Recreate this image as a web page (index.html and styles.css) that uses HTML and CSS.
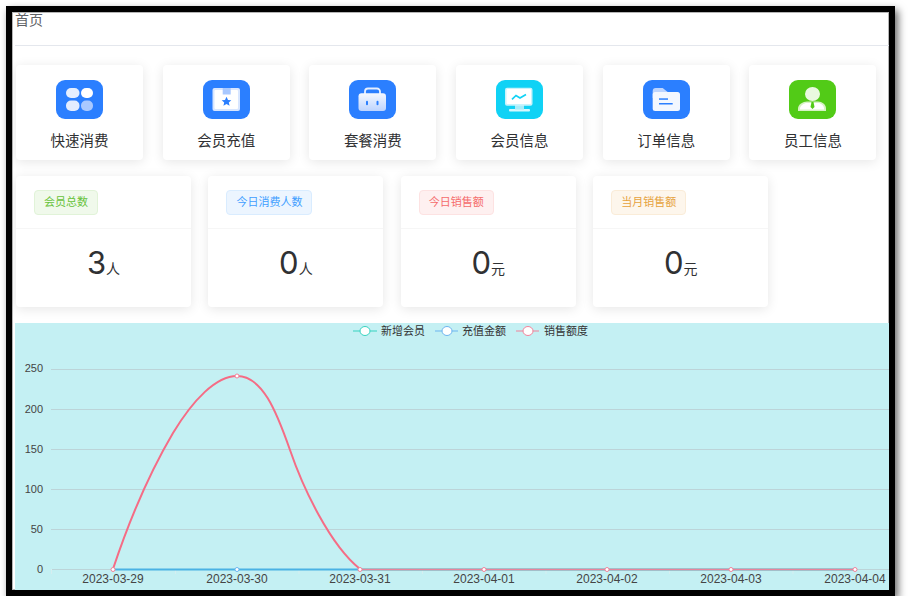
FILE: index.html
```html
<!DOCTYPE html>
<html>
<head>
    <title>首页</title>
    <link rel="stylesheet" href="styles.css">
</head>
<body>
    <div class="frame">
        <div class="page-title">首页</div>

        <div class="shortcuts">
            <div class="shortcut">
                <svg class="shortcut-icon" viewBox="0 0 47 39">
                    <rect width="47" height="39" rx="9" fill="#2b7fff"/>
                    <rect x="10" y="8" width="13.500" height="10" rx="5" fill="#e6efff"/>
                    <rect x="25" y="8" width="12" height="10" rx="5" fill="#fff"/>
                    <rect x="10" y="20.500" width="13.500" height="10.500" rx="5" fill="#e3edff"/>
                    <rect x="25" y="20.500" width="12" height="10.500" rx="5" fill="#a9c9ff"/>
                </svg>
                <span>快速消费</span>
            </div>
            <div class="shortcut">
                <svg class="shortcut-icon" viewBox="0 0 47 39">
                    <rect width="47" height="39" rx="9" fill="#2b7fff"/>
                    <rect x="9.500" y="8" width="27.500" height="23" rx="2" fill="#d8e6ff"/>
                    <rect x="11.500" y="10" width="23.500" height="19" rx="1" fill="#fff"/>
                    <rect x="19.700" y="8" width="8" height="6.500" fill="#a8c8ff"/>
                    <polygon points="23.500,16.800 25,20 28.300,20.300 25.800,22.500 26.600,25.800 23.500,24 20.400,25.800 21.200,22.500 18.700,20.300 22,20" fill="#2b7fff"/>
                </svg>
                <span>会员充值</span>
            </div>
            <div class="shortcut">
                <svg class="shortcut-icon" viewBox="0 0 47 39">
                    <defs>
                        <linearGradient id="caseBody" x1="0" y1="0" x2="0" y2="1">
                            <stop offset="0" stop-color="#f4f8ff"/>
                            <stop offset="1" stop-color="#bdd4ff"/>
                        </linearGradient>
                    </defs>
                    <rect width="47" height="39" rx="9" fill="#2b7fff"/>
                    <path d="M16 14v-2.500a3 3 0 0 1 3-3h9a3 3 0 0 1 3 3v2.500" fill="none" stroke="#e6efff" stroke-width="1.800"/>
                    <rect x="9.500" y="13.300" width="27.500" height="17.700" rx="3" fill="url(#caseBody)"/>
                    <rect x="17" y="20.700" width="2" height="4.500" rx="1" fill="#2b7fff"/>
                    <rect x="27.500" y="20.700" width="2" height="4.500" rx="1" fill="#2b7fff"/>
                </svg>
                <span>套餐消费</span>
            </div>
            <div class="shortcut">
                <svg class="shortcut-icon" viewBox="0 0 47 39">
                    <rect width="47" height="39" rx="9" fill="#10d2f5"/>
                    <rect x="13" y="29" width="21" height="2.500" rx="1" fill="#d6f7fd"/>
                    <rect x="19" y="24" width="9" height="5.500" fill="#a9ecf9"/>
                    <rect x="9" y="7.700" width="27.500" height="18" rx="2" fill="#c9f3fb"/>
                    <rect x="10.500" y="9" width="24.500" height="15" rx="1" fill="#fff"/>
                    <polyline points="16,19.300 20,15.500 24,18 30,14.500" fill="none" stroke="#10d2f5" stroke-width="1.700"/>
                </svg>
                <span>会员信息</span>
            </div>
            <div class="shortcut">
                <svg class="shortcut-icon" viewBox="0 0 47 39">
                    <rect width="47" height="39" rx="9" fill="#2b7fff"/>
                    <path d="M9.700 11a3 3 0 0 1 3-3h7l5 4v6h-15z" fill="#bcd4ff"/>
                    <rect x="9.700" y="12" width="27.300" height="19" rx="2.500" fill="#f3f7ff"/>
                    <rect x="16" y="18.300" width="9" height="1.500" fill="#2b7fff"/>
                    <rect x="16" y="23" width="13.700" height="1.500" fill="#2b7fff"/>
                </svg>
                <span>订单信息</span>
            </div>
            <div class="shortcut">
                <svg class="shortcut-icon" viewBox="0 0 47 39">
                    <rect width="47" height="39" rx="9" fill="#52cb17"/>
                    <ellipse cx="23.500" cy="14" rx="7.500" ry="7" fill="#eaf9e0"/>
                    <path d="M9 31v-2.500c0-4 5-7 9-7h11c4 0 8 3 8 7v2.500z" fill="#d6f2c4"/>
                    <path d="M11 29.500v-1c0-3 4-5.500 7-5.500h11c3 0 6 2.500 6 5.500v1z" fill="#fff"/>
                    <polygon points="22.500,22 24.500,22 25.500,27 23.500,29 21.500,27" fill="#52cb17"/>
                </svg>
                <span>员工信息</span>
            </div>
        </div>

        <div class="stats">
            <div class="stat">
                <div class="stat-head"><span class="tag tag-green">会员总数</span></div>
                <div class="stat-body"><span class="num">3</span><span class="unit">人</span></div>
            </div>
            <div class="stat">
                <div class="stat-head"><span class="tag tag-blue">今日消费人数</span></div>
                <div class="stat-body"><span class="num">0</span><span class="unit">人</span></div>
            </div>
            <div class="stat">
                <div class="stat-head"><span class="tag tag-red">今日销售额</span></div>
                <div class="stat-body"><span class="num">0</span><span class="unit">元</span></div>
            </div>
            <div class="stat">
                <div class="stat-head"><span class="tag tag-orange">当月销售额</span></div>
                <div class="stat-body"><span class="num">0</span><span class="unit">元</span></div>
            </div>
        </div>

        <div class="chart">
            <svg class="chart-svg" viewBox="15 323 874 267">
                <!-- legend -->
                <g class="legend">
                    <line x1="353" y1="331" x2="377" y2="331" stroke="#36d3c0"/>
                    <ellipse cx="365" cy="331" rx="5" ry="4.500" fill="#fff" stroke="#36d3c0"/>
                    <text x="381" y="335">新增会员</text>
                    <line x1="435" y1="331" x2="458" y2="331" stroke="#6cb5f0"/>
                    <ellipse cx="447" cy="331" rx="5" ry="4.500" fill="#fff" stroke="#6cb5f0"/>
                    <text x="462" y="335">充值金额</text>
                    <line x1="516" y1="331" x2="539" y2="331" stroke="#f2829a"/>
                    <ellipse cx="528" cy="331" rx="5" ry="4.500" fill="#fff" stroke="#f2829a"/>
                    <text x="544" y="335">销售额度</text>
                </g>

                <!-- grid -->
                <g class="grid">
                    <line x1="51" y1="369.500" x2="889" y2="369.500"/>
                    <line x1="51" y1="409.500" x2="889" y2="409.500"/>
                    <line x1="51" y1="449.500" x2="889" y2="449.500"/>
                    <line x1="51" y1="489.500" x2="889" y2="489.500"/>
                    <line x1="51" y1="529.500" x2="889" y2="529.500"/>
                    <line x1="51" y1="569.500" x2="889" y2="569.500"/>
                </g>
                <g class="ticks">
                    <line x1="51.500" y1="569" x2="51.500" y2="574"/>
                    <line x1="175.500" y1="569" x2="175.500" y2="574"/>
                    <line x1="299" y1="569" x2="299" y2="574"/>
                    <line x1="422.500" y1="569" x2="422.500" y2="574"/>
                    <line x1="546" y1="569" x2="546" y2="574"/>
                    <line x1="669.500" y1="569" x2="669.500" y2="574"/>
                    <line x1="793" y1="569" x2="793" y2="574"/>
                </g>

                <!-- axis labels -->
                <g class="y-labels">
                    <text x="43" y="372">250</text>
                    <text x="43" y="413">200</text>
                    <text x="43" y="453">150</text>
                    <text x="43" y="493">100</text>
                    <text x="43" y="533">50</text>
                    <text x="43" y="573">0</text>
                </g>
                <g class="x-labels">
                    <text x="113" y="583">2023-03-29</text>
                    <text x="237" y="583">2023-03-30</text>
                    <text x="360" y="583">2023-03-31</text>
                    <text x="484" y="583">2023-04-01</text>
                    <text x="607" y="583">2023-04-02</text>
                    <text x="731" y="583">2023-04-03</text>
                    <text x="855" y="583">2023-04-04</text>
                </g>

                <!-- series -->
                <line x1="113" y1="569.500" x2="360" y2="569.500" class="line-blue"/>
                <line x1="360" y1="569.500" x2="855" y2="569.500" class="line-grey"/>
                <line x1="360" y1="569.500" x2="855" y2="569.500" class="line-pink-thin"/>
                <path class="line-pink" d="M113 569C130 518 150 472 173 433C193 400 216 376 237 376C262 376 276 410 290 450C303 488 330 545 360 569"/>
                <circle class="dot-blue" cx="237" cy="569.500" r="2"/>
                <circle class="dot-pink" cx="113" cy="569.500" r="2"/>
                <circle class="dot-pink" cx="237" cy="376" r="2"/>
                <circle class="dot-pink" cx="360" cy="569.500" r="2"/>
                <circle class="dot-pink" cx="484" cy="569.500" r="2"/>
                <circle class="dot-pink" cx="607" cy="569.500" r="2"/>
                <circle class="dot-pink" cx="731" cy="569.500" r="2"/>
                <circle class="dot-pink" cx="855" cy="569.500" r="2"/>
            </svg>
        </div>
    </div>
</body>
</html>
```

FILE: styles.css
```css
body {
    margin: 0;
    background: #fff;
    font-family: "Liberation Sans", "Noto Sans CJK SC", sans-serif;
}
.frame {
    width: 874px;
    height: 578px;
    margin: 6px 0 0 6px;
    padding-left: 3px;
    border: 6px solid #000;
    box-shadow: 3px 4px 8px rgba(0, 0, 0, 0.6), inset 0 0 0 1px #b5b5b5;
    overflow: hidden;
}
.page-title {
    height: 33px;
    border-bottom: 1px solid #e4e7ed;
    font-size: 14px;
    line-height: 17px;
    color: #606266;
}
.shortcuts {
    display: flex;
    gap: 19.7px;
    margin-top: 19px;
    padding-left: 1px;
}
.shortcut {
    width: 127px;
    height: 95px;
    padding-top: 15px;
    box-sizing: border-box;
    display: flex;
    flex-direction: column;
    align-items: center;
    background: #fff;
    border-radius: 4px;
    box-shadow: 0 2px 12px rgba(0, 0, 0, 0.1);
    font-size: 14.5px;
    color: #303133;
}
.shortcut-icon {
    width: 47px;
    height: 39px;
    margin-bottom: 10px;
}
.stats {
    display: flex;
    gap: 17.4px;
    margin-top: 16px;
    padding-left: 1px;
}
.stat {
    width: 175px;
    height: 131px;
    background: #fff;
    border-radius: 4px;
    box-shadow: 0 2px 12px rgba(0, 0, 0, 0.1);
}
.stat-head {
    height: 53px;
    padding: 14px 0 0 18px;
    box-sizing: border-box;
    border-bottom: 1px solid #f6f6f6;
}
.tag {
    display: inline-block;
    height: 25px;
    padding: 0 9px;
    box-sizing: border-box;
    border: 1px solid;
    border-radius: 4px;
    font-size: 11px;
    line-height: 23px;
}
.tag-green {
    background: #f0f9eb;
    border-color: #e1f3d8;
    color: #67c23a;
}
.tag-blue {
    background: #ecf5ff;
    border-color: #d9ecff;
    color: #409eff;
}
.tag-red {
    background: #fef0f0;
    border-color: #fde2e2;
    color: #f56c6c;
}
.tag-orange {
    background: #fdf6ec;
    border-color: #faecd8;
    color: #e6a23c;
}
.stat-body {
    padding-top: 16px;
    text-align: center;
    color: #303133;
}
.num {
    font-family: Inter, "Liberation Sans", sans-serif;
    font-size: 31px;
    line-height: 36px;
}
.unit {
    font-size: 14px;
}
.chart {
    height: 267px;
    margin-top: 16px;
    background: #c4f0f3;
}
.chart-svg {
    display: block;
    width: 874px;
    height: 267px;
    font-size: 12px;
}
.legend text {
    font-size: 11px;
    fill: #333;
}
.grid line {
    stroke: #bcd4d8;
    stroke-width: 1;
}
.ticks line {
    stroke: #d6eef0;
}
.y-labels text {
    font-size: 11px;
    text-anchor: end;
    fill: #444;
}
.x-labels text {
    text-anchor: middle;
    fill: #444;
}
.line-blue {
    stroke: #4ab2e4;
    stroke-width: 2;
}
.line-grey {
    stroke: #98aebb;
    stroke-width: 2.5;
}
.line-pink-thin {
    stroke: #e8849c;
    stroke-width: 1;
}
.line-pink {
    fill: none;
    stroke: #f56c85;
    stroke-width: 2;
}
.dot-blue {
    fill: #fff;
    stroke: #6cb5f0;
}
.dot-pink {
    fill: #fff;
    stroke: #f2829a;
}
```
